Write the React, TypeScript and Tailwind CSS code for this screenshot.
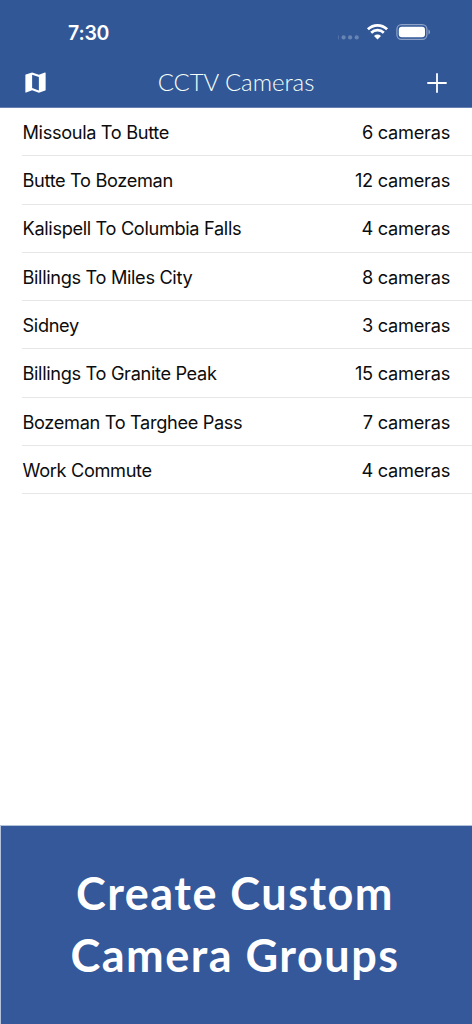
import React from "react";
import { MdMap } from "react-icons/md";

interface CameraGroup {
  name: string;
  count: number;
}

const groups: CameraGroup[] = [
  { name: "Missoula To Butte", count: 6 },
  { name: "Butte To Bozeman", count: 12 },
  { name: "Kalispell To Columbia Falls", count: 4 },
  { name: "Billings To Miles City", count: 8 },
  { name: "Sidney", count: 3 },
  { name: "Billings To Granite Peak", count: 15 },
  { name: "Bozeman To Targhee Pass", count: 7 },
  { name: "Work Commute", count: 4 },
];

const StatusIcons: React.FC = () => (
  <svg width="94" height="20" viewBox="0 0 94 20" fill="none">
    {/* no signal */}
    <g fill="#fff" fillOpacity="0.27">
      <rect x="0" y="13.4" width="1" height="4" fillOpacity="0.15" />
      <circle cx="5.6" cy="15.4" r="2.1" />
      <circle cx="12.1" cy="15.4" r="2.1" />
      <circle cx="18.7" cy="15.4" r="2.1" />
    </g>
    {/* wifi */}
    <g stroke="#fff" strokeWidth="2.7">
      <path d="M29.9 7.2C35.4 2 43.6 2 49.1 7.2" />
      <path d="M33.2 10.7C36.8 7.3 42.2 7.3 45.8 10.7" />
    </g>
    <path d="M36 13.9C38 12.1 41 12.1 43 13.9L39.5 17.4Z" fill="#fff" />
    {/* battery */}
    <rect x="58.9" y="2.7" width="30" height="14.6" rx="4.6" stroke="#fff" strokeOpacity="0.45" strokeWidth="1.2" />
    <rect x="60.8" y="4.7" width="26.2" height="10.6" rx="3" fill="#fff" />
    <path d="M90.5 7.5C92.4 8.3 92.4 11.7 90.5 12.5Z" fill="#fff" fillOpacity="0.5" />
  </svg>
);

const Header: React.FC = () => (
  <header className="h-[108px] border-b border-[#6480b2] bg-[#315797] text-white">
    <div className="flex h-[60px] items-center justify-between pl-[68px] pr-[40px] pt-1">
      <span className="pt-[3px] font-['Inter',sans-serif] text-[19.5px] font-semibold tracking-[-0.2px]">7:30</span>
      <StatusIcons />
    </div>
    <div className="flex h-[46px] items-center justify-between pl-[22px] pr-[25px]">
      <MdMap size={27} className="-mt-px" />
      <h1 className="-mt-[3px] mr-1 font-['Lato',sans-serif] text-[24px] font-light tracking-[-0.05px] text-[#f6fff8]">
        CCTV Cameras
      </h1>
      <svg width="20" height="20" viewBox="0 0 20 20" stroke="#fff" strokeWidth="1.8">
        <path d="M10 0.3V19.7M0.3 10H19.7" />
      </svg>
    </div>
  </header>
);

export default function App() {
  return (
    <div className="flex h-[1024px] w-[472px] flex-col overflow-hidden bg-white">
      <Header />
      <ul className="flex-1 pl-[22px] font-['Inter',sans-serif] text-[18.2px] tracking-[-0.34px] text-[#0c0c0c]">
        {groups.map((item) => (
          <li
            key={item.name}
            className="flex h-[48.3px] items-center justify-between border-b border-[#e6e6e6] pl-[0.5px] pr-[22px] pt-[1.6px]"
          >
            <span>{item.name}</span>
            <span className="tracking-[-0.25px]">{item.count} cameras</span>
          </li>
        ))}
      </ul>
      <footer className="h-[199px] border-l border-t border-[#b4c2da] bg-[#345899] pr-[3px] pt-[36px] text-center font-['Lato',sans-serif] text-[45px] font-bold leading-[62px] tracking-[1.5px] text-white">
        <p>Create Custom</p>
        <p>Camera Groups</p>
      </footer>
    </div>
  );
}
